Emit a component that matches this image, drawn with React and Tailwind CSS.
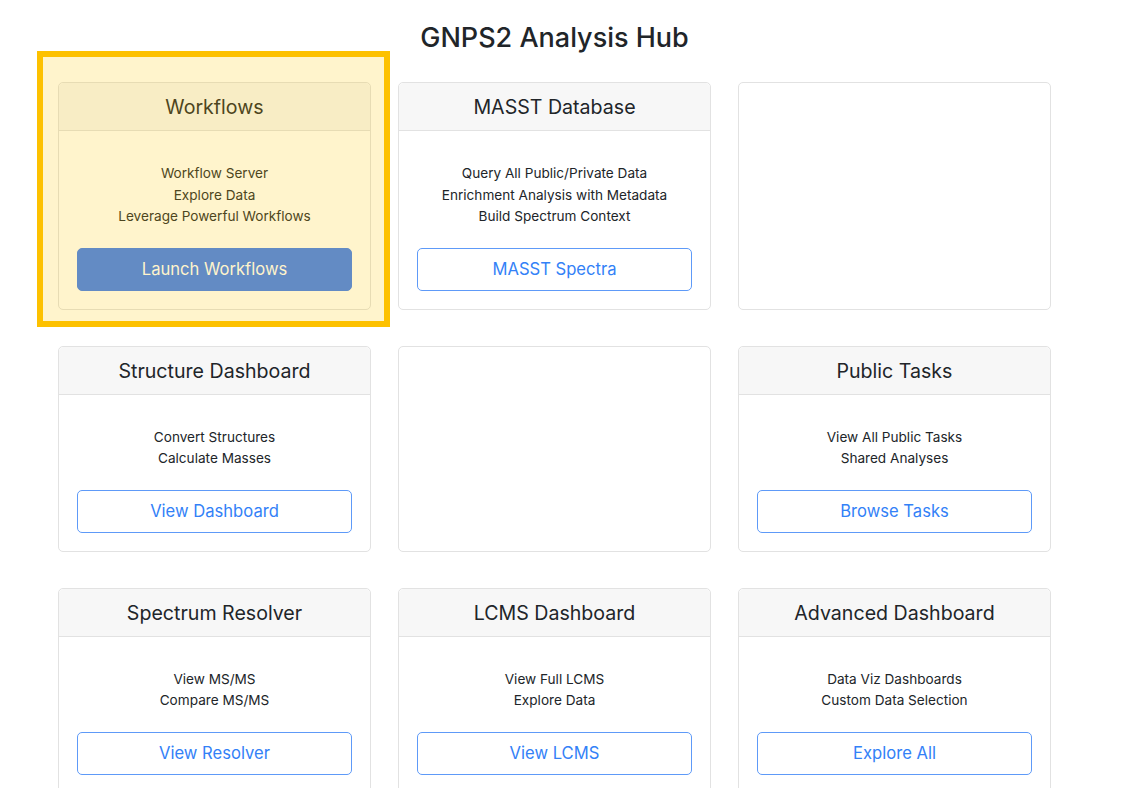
import React from 'react';

const CARDS = [
  { title: 'Workflows', lines: ['Workflow Server', 'Explore Data', 'Leverage Powerful Workflows'], button: 'Launch Workflows', primary: true, highlight: true },
  { title: 'MASST Database', lines: ['Query All Public/Private Data', 'Enrichment Analysis with Metadata', 'Build Spectrum Context'], button: 'MASST Spectra' },
  null,
  { title: 'Structure Dashboard', lines: ['Convert Structures', 'Calculate Masses'], button: 'View Dashboard' },
  null,
  { title: 'Public Tasks', lines: ['View All Public Tasks', 'Shared Analyses'], button: 'Browse Tasks' },
  { title: 'Spectrum Resolver', lines: ['View MS/MS', 'Compare MS/MS'], button: 'View Resolver' },
  { title: 'LCMS Dashboard', lines: ['View Full LCMS', 'Explore Data'], button: 'View LCMS' },
  { title: 'Advanced Dashboard', lines: ['Data Viz Dashboards', 'Custom Data Selection'], button: 'Explore All' },
];

export default function App() {
  return (
    <div className="min-h-screen bg-white text-[#212529]" style={{ fontFamily: 'Inter, "Liberation Sans", sans-serif' }}>
      <div className="ml-[58px] w-[993px] pt-[21px]">
        <h1 className="text-center text-[27px] leading-[34px] font-medium mb-[27px]">GNPS2 Analysis Hub</h1>
        <div className="grid grid-cols-[313px_313px_313px] gap-x-[27px] gap-y-[36px]">
          {CARDS.map((c, i) => (c ? <Card key={i} {...c} /> : <div key={i} className="rounded-[5px] border border-[#e2e2e2] bg-white" />))}
        </div>
      </div>
    </div>
  );
}

function Card({ title, lines, button, primary, highlight }) {
  return (
    <div className="relative">
      <div className="rounded-[5px] border border-[#e2e2e2] bg-white h-full flex flex-col">
        <div className="bg-[#f7f7f7] border-b border-[#e2e2e2] rounded-t-[5px] h-[48px] pt-[3px] flex items-center justify-center text-[19.6px]">
          {title}
        </div>
        <div className="flex-1 px-[18px] pt-[32px] pb-[18px] flex flex-col items-center">
          <div className="text-[13.6px] leading-[21.5px] text-center">
            {lines.map((l) => <div key={l}>{l}</div>)}
          </div>
          <button
            className={`mt-[20px] w-full h-[43px] rounded-[5px] text-[16.6px] ${
              primary ? 'bg-[#3d7cf5] text-white border border-[#3d7cf5]' : 'bg-white text-[#3381f7] border border-[#5e9af8]'
            }`}
          >
            {button}
          </button>
        </div>
      </div>
      {highlight && (
        <div className="absolute -top-[31px] -left-[21px] -right-[19px] -bottom-[17px] border-[6px] border-[#fdc100] bg-[rgba(255,200,0,0.2)] pointer-events-none" />
      )}
    </div>
  );
}
